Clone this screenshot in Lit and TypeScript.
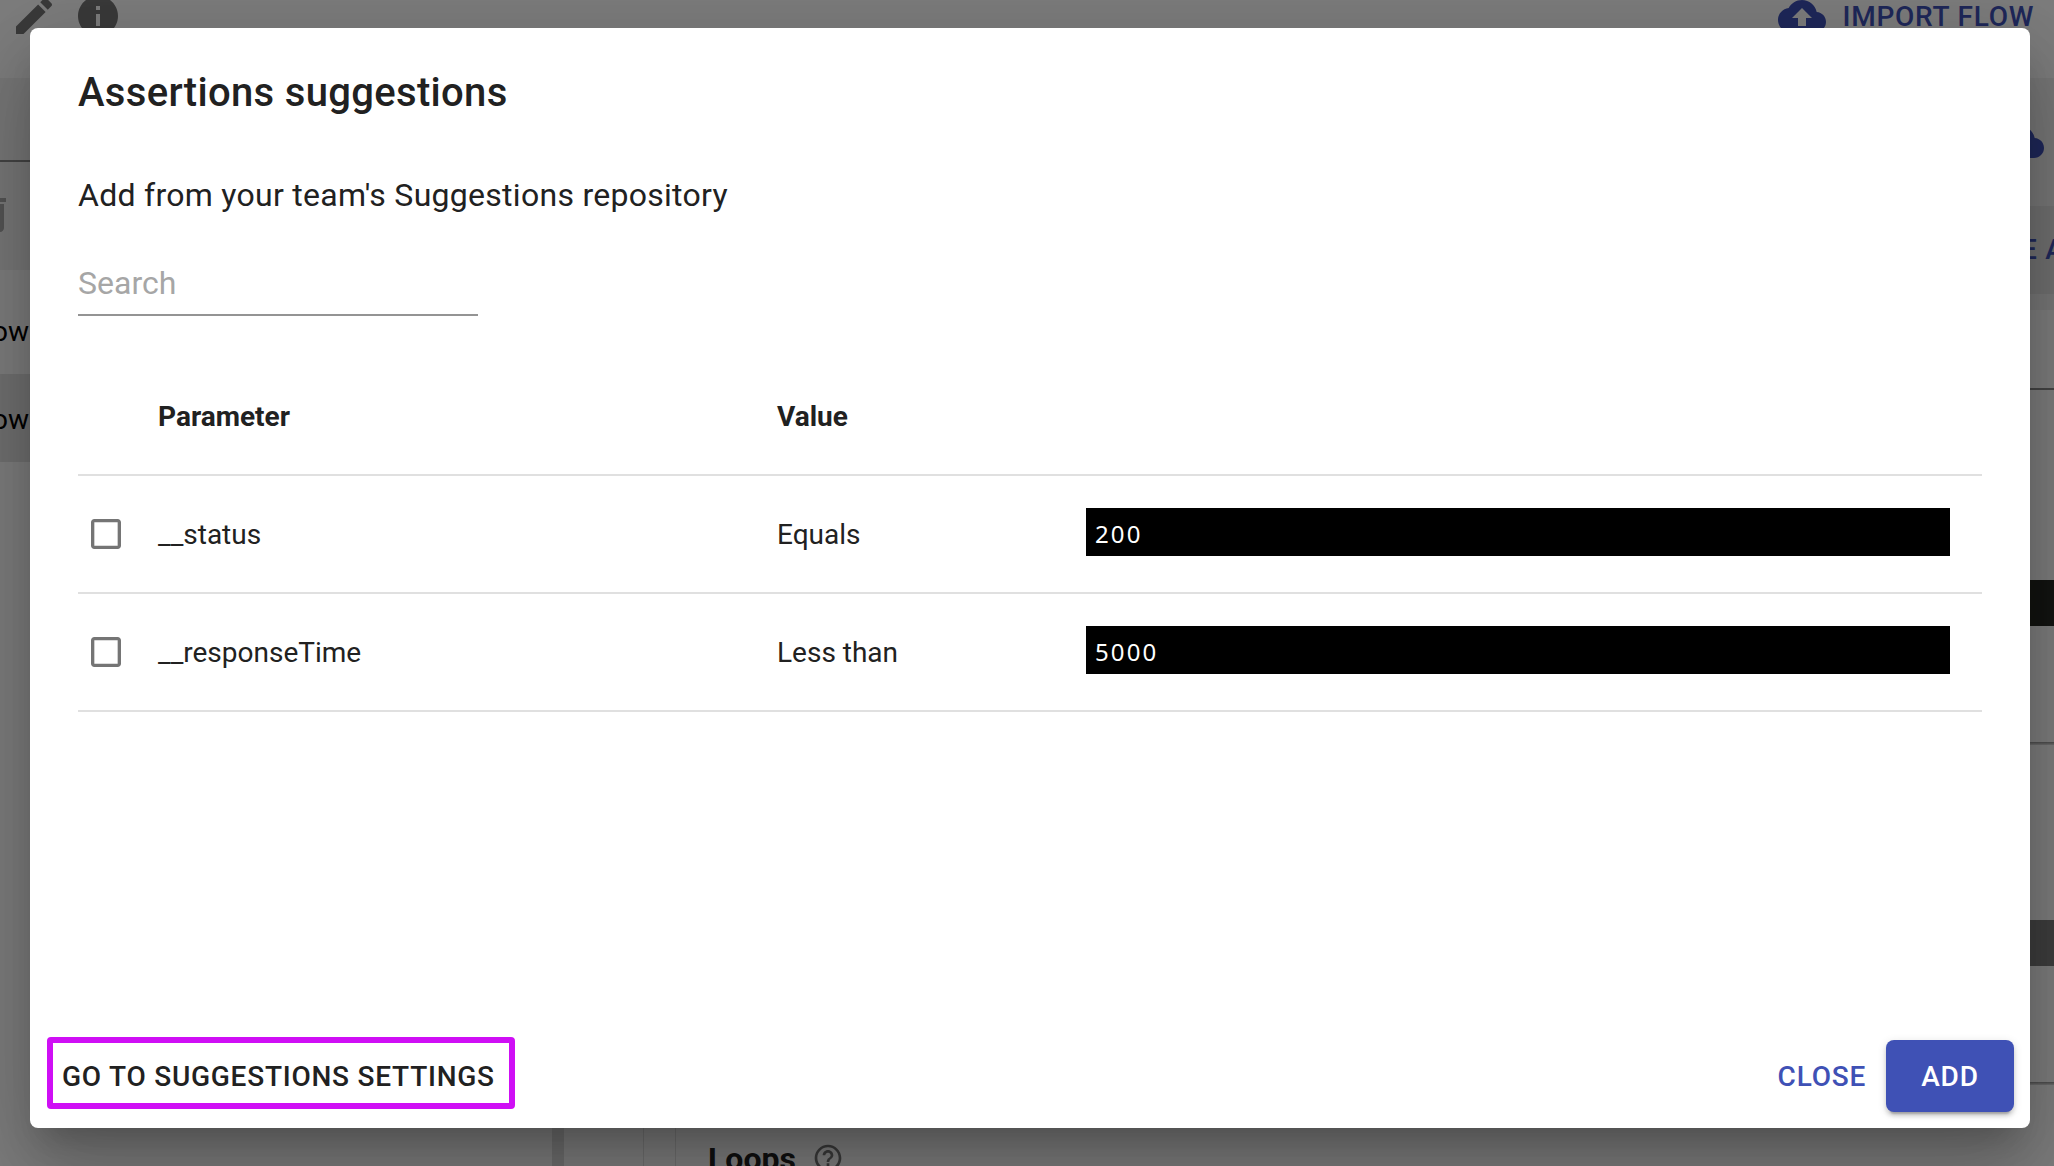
import { LitElement, html, css, svg } from "lit";
import { customElement } from "lit/decorators.js";

const shape = (name: string, d: string) =>
  html`<svg class="icon ${name}" viewBox="0 0 24 24">${svg`<path d=${d}></path>`}</svg>`;

const PENCIL =
  "M3 17.25V21h3.75L17.81 9.94l-3.75-3.75L3 17.25zM20.71 7.04c.39-.39.39-1.02 0-1.41l-2.34-2.34a.9959.9959 0 0 0-1.41 0l-1.83 1.83 3.75 3.75 1.83-1.83z";
const INFO = "M12 2C6.48 2 2 6.48 2 12s4.48 10 10 10 10-4.48 10-10S17.52 2 12 2zm1 15h-2v-6h2v6zm0-8h-2V7h2v2z";
const CLOUD_UP =
  "M19.35 10.04C18.67 6.59 15.64 4 12 4 9.11 4 6.6 5.64 5.35 8.04 2.34 8.36 0 10.91 0 14c0 3.31 2.69 6 6 6h13c2.76 0 5-2.24 5-5 0-2.64-2.05-4.78-4.65-4.96zM14 13v4h-4v-4H7l5-5 5 5h-3z";
const TRASH = "M6 19c0 1.1.9 2 2 2h8c1.1 0 2-.9 2-2V7H6v12zM19 4h-3.500l-1-1h-5l-1 1H5v2h14V4z";
const HELP =
  "M11 18h2v-2h-2v2zm1-16C6.48 2 2 6.48 2 12s4.480 10 10 10 10-4.480 10-10S17.520 2 12 2zm0 18c-4.410 0-8-3.590-8-8s3.590-8 8-8 8 3.590 8 8-3.590 8-8 8zm0-14c-2.210 0-4 1.790-4 4h2c0-1.100.9-2 2-2s2 .9 2 2c0 2-3 1.750-3 5h2c0-2.250 3-2.500 3-5 0-2.210-1.790-4-4-4z";
const CHECKBOX = "M19 5v14H5V5h14m0-2H5c-1.1 0-2 .9-2 2v14c0 1.1.9 2 2 2h14c1.1 0 2-.9 2-2V5c0-1.1-.9-2-2-2z";

@customElement("page-backdrop")
class PageBackdrop extends LitElement {
  static styles = css`
    :host { display: block; position: absolute; inset: 0; overflow: hidden; background: #fafafa; }
    .item { position: absolute; }
    .icon { position: absolute; width: 48px; height: 48px; fill: #757575; }
    .pencil { left: 10px; top: -8px; }
    .info { left: 74px; top: -8px; }
    .cloud-a { left: 1778px; top: -8px; fill: #3f51b5; }
    .cloud-b { left: 1996px; top: 118px; fill: #3f51b5; }
    .trash { left: -32px; top: 190px; fill: #a6a6a6; }
    .help { left: 812px; top: 1142px; width: 32px; height: 32px; }
    .text { position: absolute; white-space: nowrap; font: 400 28px/40px Roboto, sans-serif; color: #000; }
    .btn { font-weight: 500; color: #3f51b5; letter-spacing: 0.76px; }
    .import { left: 1842.5px; top: -3px; }
    .save { left: 2021px; top: 230px; }
    .flow-a { right: 2025px; top: 312px; }
    .flow-b { right: 2025px; top: 400px; }
    .loops { left: 708px; top: 1139px; font-weight: 700; font-size: 32px; color: #222; }
    .shade { left: 0; right: 0; top: 78px; height: 192px; background: #efefef; }
    .shade-r { left: 2000px; right: 0; top: 78px; height: 232px; background: #efefef; }
    .tab { left: 2000px; right: 0; top: 206px; height: 88px; background: #e0e0e0; }
    .sel { left: 0; width: 60px; top: 374px; height: 88px; background: #e0e0e0; }
    .line-l { left: 0; width: 60px; top: 160px; height: 2px; background: #888; }
    .line-r { left: 2000px; right: 0; top: 388px; height: 2px; background: #888; }
    .dark { left: 2000px; right: 0; top: 523px; height: 0; background: #272822; }
    .dark { top: 580px; height: 46px; }
    .gray { left: 2000px; right: 0; top: 920px; height: 46px; background: #7d7d7d; }
    .rule-a { left: 2000px; right: 0; top: 742px; height: 3px; background: linear-gradient(#949494, #dcdcdc); }
    .rule-b { left: 2000px; right: 0; top: 1082px; height: 3px; background: linear-gradient(#949494, #dcdcdc); }
    .gutter { left: 552px; width: 12px; top: 1100px; bottom: 0; background: #dcdcdc; }
    .edge-a { left: 643px; width: 1px; top: 1100px; bottom: 0; background: #dedede; }
    .edge-b { left: 675px; width: 1px; top: 1100px; bottom: 0; background: #dedede; }
  `;
  render() {
    return html`
      <div class="item shade"></div>
      <div class="item shade-r"></div>
      <div class="item tab"></div>
      <div class="item sel"></div>
      <div class="item line-l"></div>
      <div class="item line-r"></div>
      <div class="item dark"></div>
      <div class="item gray"></div>
      <div class="item rule-a"></div>
      <div class="item rule-b"></div>
      <div class="item gutter"></div>
      <div class="item edge-a"></div>
      <div class="item edge-b"></div>
      ${shape("pencil", PENCIL)}${shape("info", INFO)}${shape("cloud-a", CLOUD_UP)}
      ${shape("cloud-b", CLOUD_UP)}${shape("trash", TRASH)}${shape("help", HELP)}
      <span class="text btn import">IMPORT FLOW</span>
      <span class="text btn save">E A</span>
      <span class="text flow-a">ow</span>
      <span class="text flow-b">ow</span>
      <span class="text loops">Loops</span>
    `;
  }
}

const ROWS = [
  { name: "__status", op: "Equals", value: "200" },
  { name: "__responseTime", op: "Less than", value: "5000" },
];

@customElement("app-root")
class AppRoot extends LitElement {
  static styles = css`
    :host { display: block; position: relative; width: 2054px; height: 1166px; overflow: hidden; font-family: Roboto, "Liberation Sans", sans-serif; color: #212121; }
    .scrim { position: absolute; inset: 0; box-sizing: border-box; padding: 28px 24px 38px 30px; background: rgba(0, 0, 0, 0.5); }
    .dialog {
      display: flex; flex-direction: column; box-sizing: border-box; width: 2000px; height: 1100px;
      background: #fff; border-radius: 8px;
      box-shadow: 0 22px 30px -14px rgba(0, 0, 0, 0.2), 0 48px 76px 6px rgba(0, 0, 0, 0.14), 0 18px 92px 16px rgba(0, 0, 0, 0.12);
    }
    .title { margin: 0; padding: 33px 48px 31px; font-size: 40px; line-height: 64px; font-weight: 500; letter-spacing: 0.32px; }
    .content { flex: 1; padding: 15px 48px 16px; }
    .sub { margin: 0; font-size: 32px; line-height: 48px; letter-spacing: 0.28px; }
    .search { box-sizing: border-box; width: 400px; height: 64px; margin-top: 33px; padding-top: 12px; border-bottom: 2px solid #949494; font-size: 32px; line-height: 38px; color: #a6a6a6; }
    .table { margin-top: 42px; }
    .row { display: grid; grid-template-columns: 80px 619px 309px 1fr; align-items: center; box-sizing: border-box; height: 118px; border-bottom: 2px solid #e0e0e0; font-size: 28px; line-height: 40px; }
    .row span { padding-top: 2px; }
    .head { font-weight: 700; }
    .box { display: block; width: 40px; height: 40px; margin-left: 8px; fill: #757575; }
    .code { height: 48px; margin-right: 32px; margin-top: -4px; padding-left: 9px; background: #000; color: #fff; font: 24px/52px "Noto Sans", sans-serif; letter-spacing: 2.1px; box-sizing: border-box; }
    .actions { display: flex; align-items: center; padding: 16px; height: 72px; gap: 8px; font-size: 28px; font-weight: 500; letter-spacing: 0.76px; }
    .settings { display: flex; align-items: center; box-sizing: border-box; width: 468px; height: 72px; margin: -6px auto 0 1px; padding-left: 9px; padding-top: 6px; border: 6px solid #cf0ff5; border-radius: 4px; white-space: nowrap; }
    .close { color: #3f51b5; padding: 0 12px; }
    .add { display: flex; align-items: center; justify-content: center; width: 128px; height: 72px; border-radius: 8px; background: #3f51b5; color: #fff; box-shadow: 0 6px 2px -4px rgba(0, 0, 0, 0.2), 0 4px 4px rgba(0, 0, 0, 0.14), 0 2px 10px rgba(0, 0, 0, 0.12); }
  `;
  render() {
    return html`
      <page-backdrop></page-backdrop>
      <div class="scrim">
        <div class="dialog">
          <h2 class="title">Assertions suggestions</h2>
          <div class="content">
            <p class="sub">Add from your team's Suggestions repository</p>
            <div class="search">Search</div>
            <div class="table">
              <div class="row head"><span></span><span>Parameter</span><span>Value</span><span></span></div>
              ${ROWS.map(
                (r) => html`<div class="row">
                  <svg class="box" viewBox="0 0 24 24"><path d=${CHECKBOX}></path></svg>
                  <span>${r.name}</span><span>${r.op}</span><div class="code">${r.value}</div>
                </div>`
              )}
            </div>
          </div>
          <div class="actions">
            <div class="settings">GO TO SUGGESTIONS SETTINGS</div>
            <div class="close">CLOSE</div>
            <div class="add">ADD</div>
          </div>
        </div>
      </div>
    `;
  }
}
